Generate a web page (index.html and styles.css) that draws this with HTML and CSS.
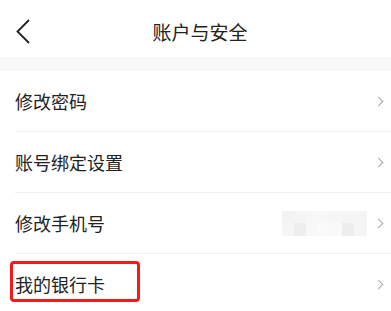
FILE: index.html
```html
<!DOCTYPE html>
<html lang="zh-CN">
<head>
<meta charset="utf-8">
<link rel="stylesheet" href="styles.css">
</head>
<body>
<header class="nav">
  <svg class="back" width="14" height="26" viewBox="0 0 14 26"><polyline points="13,1 1.5,12.5 13,24" fill="none" stroke="#222" stroke-width="1.8"/></svg>
  <div class="title">账户与安全</div>
</header>
<div class="band"></div>
<ul class="list">
  <li class="row"><span class="label">修改密码</span><span class="chev"></span></li>
  <li class="row"><span class="label">账号绑定设置</span><span class="chev"></span></li>
  <li class="row"><span class="label">修改手机号</span>
    <span class="blur">
      <span class="b b1"></span><span class="b b2"></span><span class="b b3"></span><span class="b b4"></span><span class="b b5"></span>
      <span class="b b6"></span><span class="b b7"></span><span class="b b8"></span><span class="b b9"></span><span class="b b10"></span>
    </span>
    <span class="chev"></span></li>
  <li class="row last"><span class="label">我的银行卡</span><span class="chev"></span><span class="mark"></span></li>
</ul>
</body>
</html>
```
FILE: styles.css
```css
* { box-sizing: border-box; }
html, body { margin: 0; padding: 0; background: #fff; }
body { font-family: "Noto Sans CJK SC", "Noto Sans", sans-serif; color: #222; width: 391px; height: 311px; overflow: hidden; }
.nav { position: relative; height: 57px; display: flex; align-items: center; justify-content: center; }
.back { position: absolute; left: 16px; top: 19px; }
.title { font-size: 19px; line-height: 1; padding-left: 9px; color: #222; margin-top: 6px; }
.band { height: 14px; background: #f8f8f8; }
.list { list-style: none; margin: 0; padding: 0; }
.row { position: relative; height: 61px; margin-left: 15px; border-bottom: 1px solid #eeeeee; display: flex; align-items: center; padding-right: 9px; }
.row.last { border-bottom: none; }
.label { flex: 1; font-size: 18px; line-height: 1; color: #222; padding-bottom: 1px; }
.chev { width: 7px; height: 7px; border-top: 1.2px solid #aaa; border-right: 1.2px solid #aaa; transform: rotate(45deg); }
.blur { display: grid; grid-template-columns: 12px 12px 12px 12px 12px 12px 13px; grid-template-rows: 12px 13px; width: 85px; height: 25px; margin-right: 8px; background: #f5f5f5; }
.b { background: #f4f4f4; }
.b1 { background: #f3f3f3; }
.b2 { background: #f5f5f5; }
.b3 { background: #f7f7f7; }
.b4 { background: #f7f7f7; }
.b5 { background: #f6f6f6; }
.b6 { background: #eeeeee; grid-row: 2; grid-column: 2; }
.b7 { background: #f8f8f8; grid-row: 2; grid-column: 3; }
.b8 { background: #fafafa; grid-row: 2; grid-column: 4; }
.b9 { background: #f9f9f9; grid-row: 2; grid-column: 5; }
.b10 { background: #ededed; grid-row: 2; grid-column: 6; }
.mark { position: absolute; left: -5px; top: 7px; width: 130px; height: 41px; border: 3px solid #f41a1a; border-radius: 4px; }
```
